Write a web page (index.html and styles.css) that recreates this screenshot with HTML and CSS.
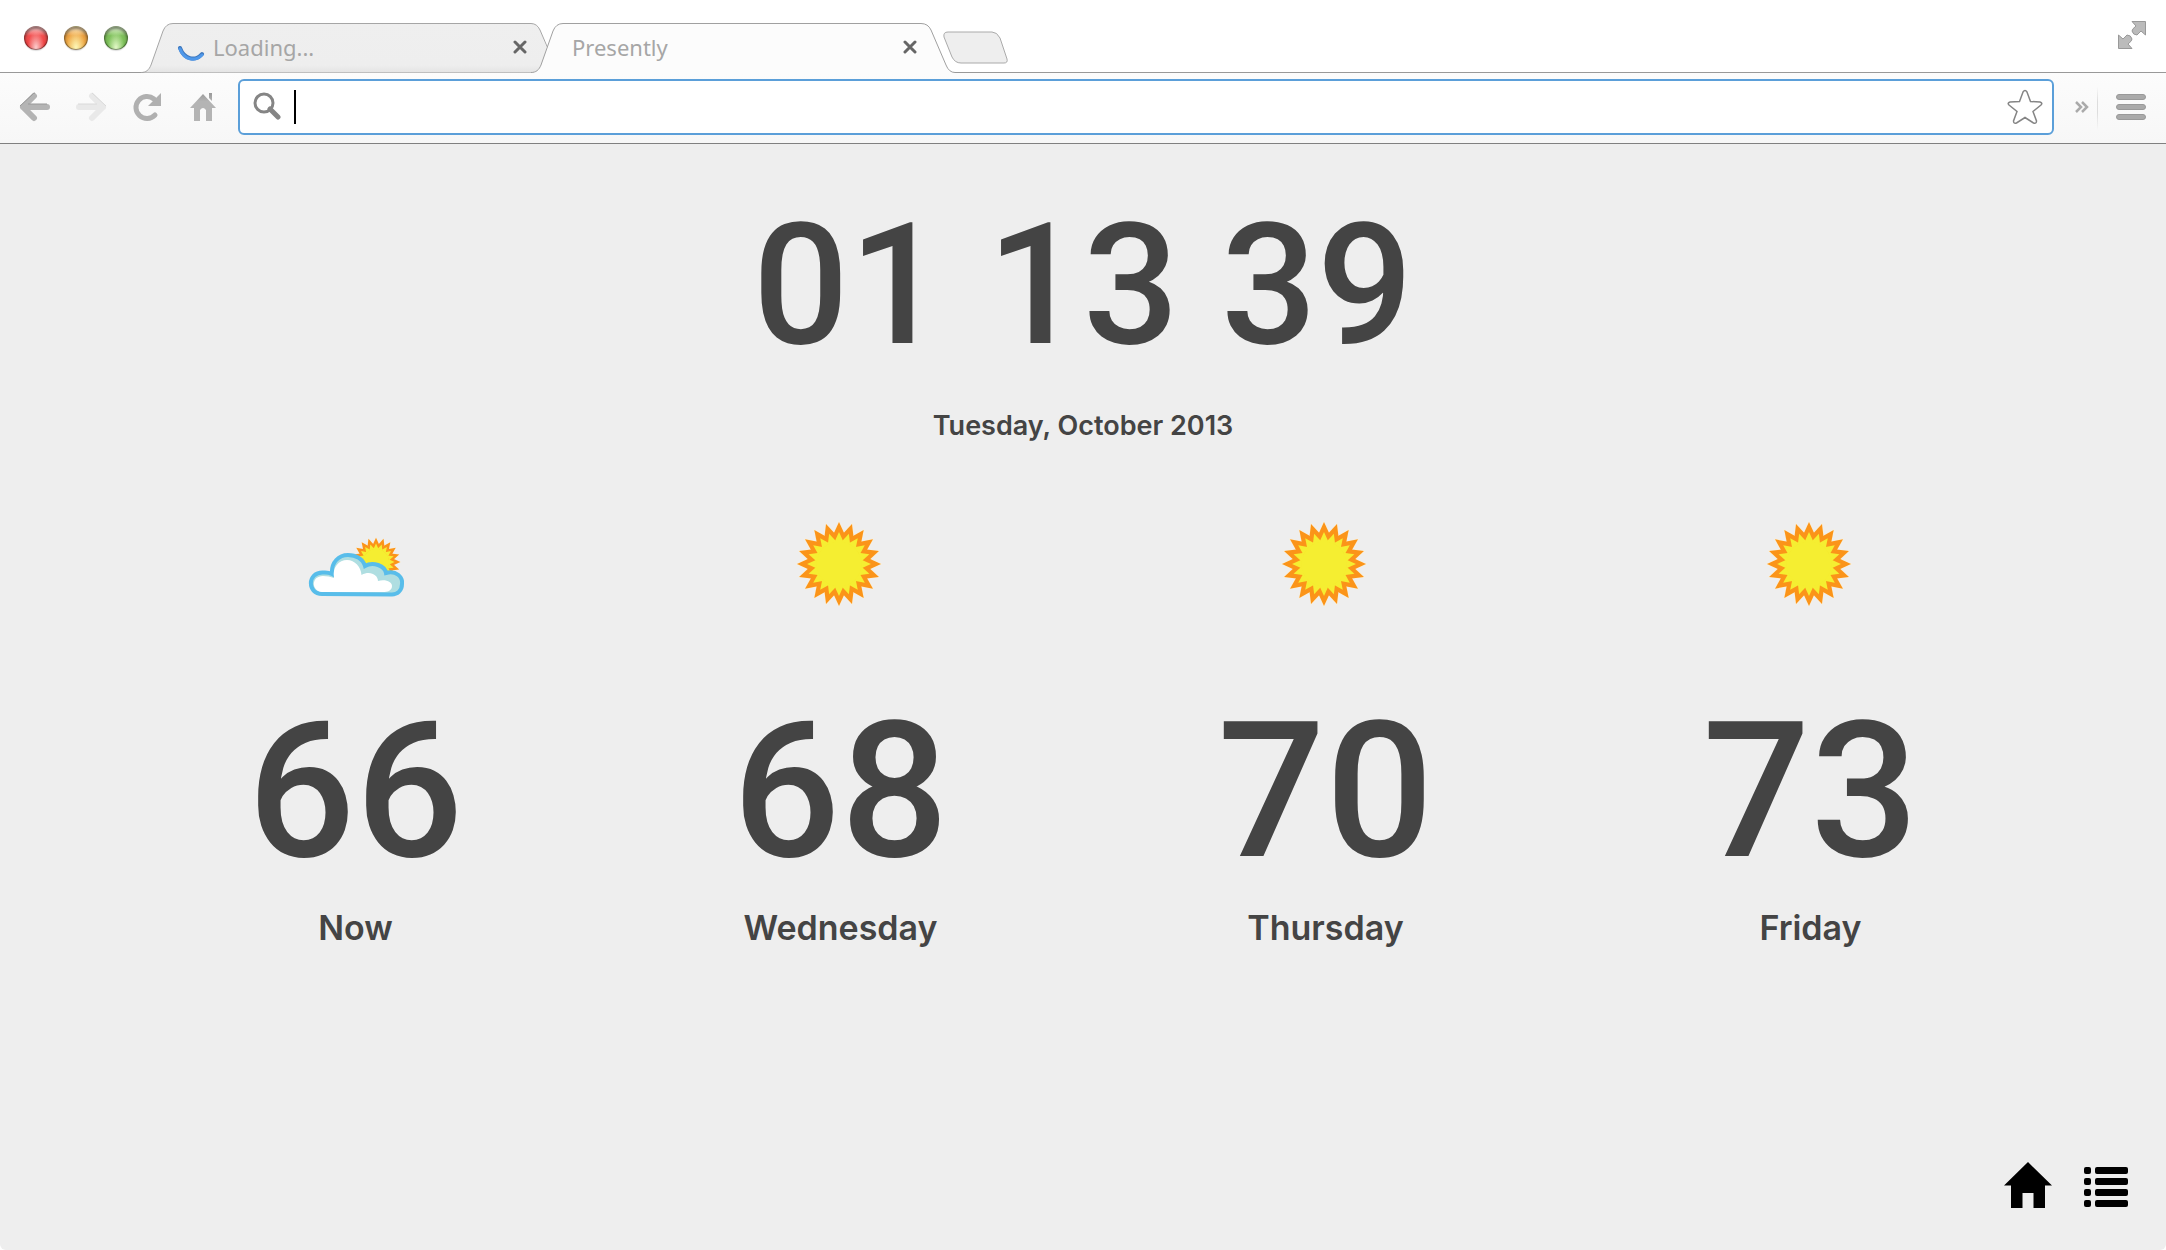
FILE: index.html
```html
<!DOCTYPE html>
<html lang="en">
<head>
<meta charset="utf-8">
<title>Presently</title>
<link rel="stylesheet" href="styles.css">
</head>
<body>
<svg class="defs" width="0" height="0" aria-hidden="true">
  <defs>
    <linearGradient id="tab-fill" x1="0" y1="0" x2="0" y2="1"><stop offset="0" stop-color="#efefef"/><stop offset=".85" stop-color="#eee"/><stop offset="1" stop-color="#e4e4e4"/></linearGradient>
    <linearGradient id="grey" x1="0" y1="0" x2="0" y2="1"><stop offset="0" stop-color="#999"/><stop offset=".3" stop-color="#b4b4b4"/><stop offset="1" stop-color="#b4b4b4"/></linearGradient>
    <path id="spike" d="M-6-29L0-42L6-29Z"/>
    <g id="spikes5"><use href="#spike"/><use href="#spike" transform="rotate(18)"/><use href="#spike" transform="rotate(36)"/><use href="#spike" transform="rotate(54)"/><use href="#spike" transform="rotate(72)"/></g>
    <g id="star20"><circle r="30"/><use href="#spikes5"/><use href="#spikes5" transform="rotate(90)"/><use href="#spikes5" transform="rotate(180)"/><use href="#spikes5" transform="rotate(270)"/></g>
    <g id="sun"><use href="#star20" fill="#fbf0d4" transform="scale(1.03)"/><use href="#star20" fill="#fb9419"/><use href="#star20" fill="#f5ee31" transform="scale(.76)"/></g>
    <path id="cross" d="M2 2L12 12M12 2L2 12" stroke="#666" stroke-width="3" stroke-linecap="round"/>
  </defs>
</svg>
<header class="browser">
  <div class="tabstrip">
    <div class="lights">
      <button class="light red" aria-label="Close window"></button>
      <button class="light amber" aria-label="Minimize window"></button>
      <button class="light green" aria-label="Zoom window"></button>
    </div>
    <div class="tabs">
      <div class="tab tab-idle">
        <svg class="shape" width="412" height="51" viewBox="0 0 412 51"><path d="M0 49.500C5 49.500 8 47 10 42L22 8Q25 .5 32 .5H390Q396 .5 399 7L412 42V49.500Z" fill="url(#tab-fill)"/><path d="M0 49.500C5 49.500 8 47 10 42L22 8Q25 .5 32 .5H390Q396 .5 399 7L408 28" fill="none" stroke="#a6a6a6"/></svg>
        <svg class="spinner" width="28" height="16" viewBox="0 0 28 16"><path d="M3 3C7 14 18 17 25 9" fill="none" stroke="#3f78bd" stroke-width="4" stroke-linecap="round"/><path d="M3 4C7 15 18 17 25 10" fill="none" stroke="#4f98ea" stroke-width="3" stroke-linecap="round"/></svg>
        <span class="title">Loading...</span>
        <button class="close" aria-label="Close tab"><svg width="14" height="14"><use href="#cross"/></svg></button>
      </div>
      <div class="tab tab-current">
        <svg class="shape" width="424" height="51" viewBox="0 0 424 51"><path d="M0 49.500C5 49.500 8 47 10 42L22 8Q25 .5 32 .5H390Q397 .5 400 7L415 42Q418 49.500 424 49.500V51H0Z" fill="#fcfcfc"/><path d="M0 49.500C5 49.500 8 47 10 42L22 8Q25 .5 32 .5H390Q397 .5 400 7L415 42Q418 49.500 424 49.500" fill="none" stroke="#a0a0a0"/></svg>
        <span class="title">Presently</span>
        <button class="close" aria-label="Close tab"><svg width="14" height="14"><use href="#cross"/></svg></button>
      </div>
    </div>
    <button class="newtab" aria-label="New tab"><svg width="66" height="34" viewBox="0 0 66 34"><path d="M5 1H49Q54 1 57 7L64 28Q65 32 61 32H18Q12 32 9 26L1 6Q0 1 5 1Z" fill="#eee" stroke="#aaa"/></svg></button>
    <button class="fullscreen" aria-label="Full screen"><svg width="28" height="28" viewBox="0 0 28 28"><path d="M14 .5H27.500V14L23 10L19 14Q15 14 14 10Q14 8 18 5ZM.5 14L5 18L9 14Q13 14 14 18Q14 20 10 23L14 27.500H.5Z" fill="#bbb" stroke="#999"/></svg></button>
  </div>
  <div class="toolbar">
    <button class="tool" aria-label="Back"><svg width="32" height="30" viewBox="0 0 32 30"><path d="M15 4L4 15L15 26M4 15H28" fill="none" stroke="#b4b4b4" stroke-width="6" stroke-linecap="round" stroke-linejoin="round"/><path d="M16 1Q14 1 13 3L1 14M9 12H28" fill="none" stroke="#989898"/></svg></button>
    <button class="tool" aria-label="Forward"><svg width="32" height="30" viewBox="0 0 32 30"><path d="M17 4L28 15L17 26M28 15H4" fill="none" stroke="#e9e9e9" stroke-width="6" stroke-linecap="round" stroke-linejoin="round"/><path d="M17 1L31 14M3 12H22" fill="none" stroke="#dadada"/></svg></button>
    <button class="tool" aria-label="Reload"><svg width="32" height="30" viewBox="0 0 32 30"><path d="M24 23A11 11 0 1 1 23 7" fill="none" stroke="#b0b0b0" stroke-width="5" stroke-linecap="round"/><path d="M30 1V14H17Z" fill="#b0b0b0"/></svg></button>
    <button class="tool" aria-label="Home"><svg width="32" height="30" viewBox="0 0 32 30"><path d="M16 2L29 16H25V29H19V18Q16 14 13 18V29H7V16H3ZM22 1H25V9L22 6Z" fill="url(#grey)"/></svg></button>
    <label class="omnibox">
      <svg width="28" height="30" viewBox="0 0 28 30"><circle cx="11" cy="11" r="9" fill="none" stroke="#858585" stroke-width="3"/><path d="M17 17L25 25" stroke="#858585" stroke-width="5" stroke-linecap="round"/></svg>
      <span class="caret"></span>
      <input type="text" aria-label="Address and search bar">
      <button class="bookmark" aria-label="Bookmark this page"><svg width="36" height="36" viewBox="0 0 36 36"><path d="M16 3Q18 0 20 3L23.500 12.500L33 13Q36 14 34 16L26 22.500L29.500 32Q29.500 35 26.500 34L18 28.500L9.500 34Q6.500 35 6.500 32L10 22.500L2 16Q0 14 3 13L12.500 12.500Z" fill="#fff" stroke="#858585" stroke-width="1.500"/></svg></button>
    </label>
    <button class="overflow" aria-label="More extensions"><svg width="14" height="12" viewBox="0 0 14 12"><path d="M1 1L6 6L1 11M7 1L12 6L7 11" fill="none" stroke="#aaa" stroke-width="2.500"/></svg></button>
    <button class="menu" aria-label="Menu"><svg width="30" height="26" viewBox="0 0 30 26"><g fill="#aaa" stroke="#999"><rect x=".5" y=".5" width="29" height="5" rx="2.500"/><rect x=".5" y="10.500" width="29" height="5" rx="2.500"/><rect x=".5" y="20.500" width="29" height="5" rx="2.500"/></g></svg></button>
  </div>
</header>
<main class="page">
  <h1 class="clock">01 13 39</h1>
  <p class="date">Tuesday, October 2013</p>
  <section class="forecast">
    <article class="day">
      <svg class="icon" width="96" height="96" viewBox="-2 -1 96 96">
        <use href="#sun" transform="translate(66 45) scale(.58)"/>
        <g transform="translate(-20 -16)">
          <path d="M32 93C17 93 17 71 33 71.500Q38 71 42 73C41 61 49 54 58 54C66 54 73 58 75 65C83 60 95 65 96 72C106 69 113 76 112 83C112 90 107 93.500 102 93.500Z" fill="#afdee1" stroke="#58bdea" stroke-width="4"/>
          <path d="M32 91C21 90 21 75 33 75Q39 75 44 77C42 66 49 59 57 59C65 59 71 66 71.500 74C80 69 88 74 88 80C96 78 102 81 102 85C102 90 97 91 93 91Z" fill="#fff"/>
        </g>
      </svg>
      <p class="temp">66</p>
      <h2 class="name">Now</h2>
    </article>
    <article class="day">
      <svg class="icon" width="96" height="96" viewBox="-46 -48 96 96"><use href="#sun"/></svg>
      <p class="temp">68</p>
      <h2 class="name">Wednesday</h2>
    </article>
    <article class="day">
      <svg class="icon" width="96" height="96" viewBox="-46 -48 96 96"><use href="#sun"/></svg>
      <p class="temp">70</p>
      <h2 class="name">Thursday</h2>
    </article>
    <article class="day">
      <svg class="icon" width="96" height="96" viewBox="-46 -48 96 96"><use href="#sun"/></svg>
      <p class="temp">73</p>
      <h2 class="name">Friday</h2>
    </article>
  </section>
  <nav class="shortcuts">
    <a href="#home" aria-label="Home"><svg width="48" height="46" viewBox="0 0 48 46"><path d="M24 0L48 23.500H41V46H29.500V31H18.500V46H7V23.500H0Z"/></svg></a>
    <a href="#list" aria-label="List"><svg width="44" height="42" viewBox="0 0 44 42"><g id="row"><rect y="1" width="7" height="7" rx="2"/><rect x="11" y="1" width="33" height="7" rx="2"/></g><use href="#row" y="11"/><use href="#row" y="22"/><use href="#row" y="33"/></svg></a>
  </nav>
</main>
</body>
</html>
```

FILE: styles.css
```css
* {
  box-sizing: border-box;
}

body {
  margin: 0;
  min-height: 100vh;
  display: flex;
  flex-direction: column;
  background: #fff;
  color: #444;
  font-family: Roboto, "Liberation Sans", Arial, sans-serif;
}

button {
  padding: 0;
  border: 0;
  background: none;
  display: flex;
}

svg {
  display: block;
  flex: none;
}

.defs {
  position: absolute;
}

/* Tab strip */
.tabstrip {
  height: 73px;
  display: flex;
  align-items: flex-start;
  border-bottom: 1px solid #999;
}

.lights {
  display: flex;
  gap: 16px;
  padding: 26px 0 0 24px;
}

.light {
  width: 24px;
  height: 24px;
  border-radius: 50%;
  border: 1px solid #0006;
  box-shadow: inset 0 2px 3px #0007, 0 1px 1px #0002;
}

.red {
  background: radial-gradient(ellipse at 50% 95%, #fbc4c4 5%, transparent 55%), linear-gradient(#fbb 10%, #f25050 40%, #ee3c3c);
}

.amber {
  background: radial-gradient(ellipse at 50% 95%, #fdf3b0 5%, transparent 60%), linear-gradient(#fde0b0 10%, #eda243 40%, #f0b048);
}

.green {
  background: radial-gradient(ellipse at 50% 95%, #dcf5c0 5%, transparent 55%), linear-gradient(#d5f0c0 10%, #7fc05c 40%, #78bf55);
}

.tabs {
  display: flex;
  padding: 23px 0 0 13px;
}

.tab {
  position: relative;
  height: 48px;
  display: flex;
  align-items: center;
  color: #a6a6a6;
  font: 22px/28px "Noto Sans", "Open Sans", sans-serif;
}

.tab-idle {
  width: 390px;
  padding: 0 4px 0 36px;
}

.tab-current {
  width: 424px;
  padding: 0 38px 0 41px;
}

.shape {
  position: absolute;
  left: 0;
  top: 0;
}

.spinner {
  position: relative;
  margin: 12px 8px 0 0;
}

.title {
  position: relative;
  flex: 1;
}

.close {
  position: relative;
}

.newtab {
  margin-top: 31px;
  margin-left: -12px;
  position: relative;
}

.fullscreen {
  margin: 21px 20px 0 auto;
}

/* Toolbar */
.toolbar {
  height: 71px;
  display: flex;
  align-items: flex-start;
  padding: 6px 20px 0 19px;
  background: linear-gradient(#fcfcfc, #f7f7f7);
  border-bottom: 1px solid #808080;
}

.toolbar > button {
  height: 56px;
  align-items: center;
}

.tool {
  margin-right: 24px;
}

.omnibox {
  flex: 1;
  height: 56px;
  display: flex;
  align-items: center;
  padding: 0 9px 0 13px;
  background: #fff;
  border: 2px solid #5b9fd9;
  border-radius: 6px;
  margin-left: -5px;
}

.caret {
  width: 2px;
  height: 34px;
  margin-left: 13px;
  background: #000;
}

.omnibox input {
  flex: 1;
  min-width: 0;
  border: 0;
  outline: 0;
  background: none;
  font: 24px/32px "Open Sans", sans-serif;
}

.overflow {
  margin: 0 8px 0 21px;
}

.menu {
  padding-left: 18px;
  border-left: 1px solid;
  border-image: linear-gradient(transparent 15%, #ddd 40%, #ddd 60%, transparent 90%) 1;
}

/* New tab page */
.page {
  flex: 1;
  display: flex;
  flex-direction: column;
  padding: 53px 38px 42px;
  background: #eee;
  border-radius: 0 0 6px 6px;
  text-align: center;
}

.clock {
  margin: 0;
  font-size: 169px;
  line-height: 176px;
  font-weight: 500;
}

.date {
  margin: 35px 0 0;
  font: 600 27px/36px Inter, "Liberation Sans", sans-serif;
}

.forecast {
  display: grid;
  grid-template-columns: repeat(4, 1fr);
  padding: 0 75px;
  margin-top: 72px;
}

.day {
  display: flex;
  flex-direction: column;
  align-items: center;
}

.temp {
  margin: 79px 0 0;
  font-size: 190px;
  line-height: 200px;
  font-weight: 500;
}

.name {
  margin: 15px 0 0;
  font: 600 34px/44px Inter, "Liberation Sans", sans-serif;
}

.shortcuts {
  margin-top: auto;
  display: flex;
  align-items: flex-end;
  justify-content: flex-end;
  gap: 32px;
}

.shortcuts a {
  color: #000;
}
```
